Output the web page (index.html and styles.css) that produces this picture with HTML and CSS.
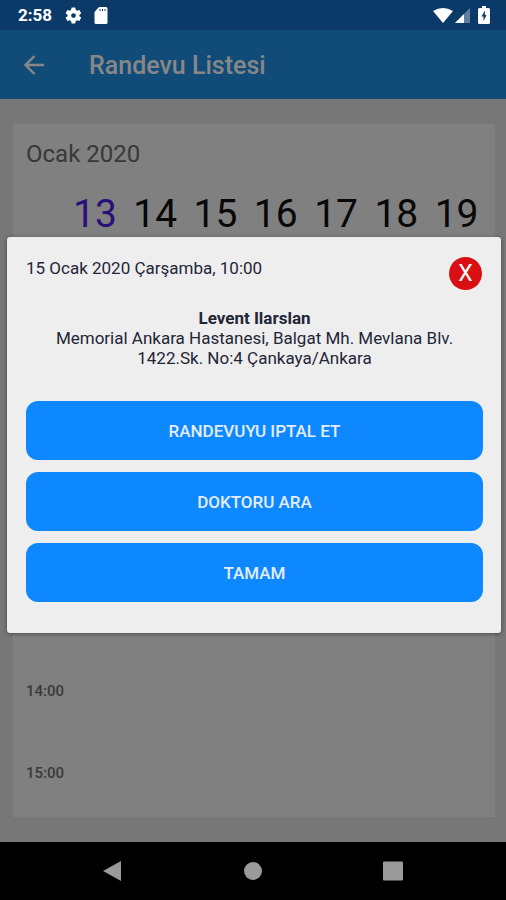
FILE: index.html
```html
<!DOCTYPE html>
<html lang="tr">
<head>
<meta charset="utf-8">
<meta name="viewport" content="width=device-width, initial-scale=1">
<title>Randevu Listesi</title>
<link rel="stylesheet" href="styles.css">
</head>
<body>
<div class="status">
  <span class="clock">2:58</span>
  <svg class="gear" width="19" height="19" viewBox="0 0 24 24"><path d="M19.4 13a7.800 7.800 0 0 0 0-2l2.100-1.600c.2-.2.300-.4.100-.7l-2-3.400c-.1-.2-.4-.3-.6-.2l-2.500 1a7.300 7.300 0 0 0-1.700-1l-.4-2.600a.5.5 0 0 0-.5-.5h-4a.5.5 0 0 0-.5.5L9 5.100c-.6.3-1.200.6-1.700 1l-2.500-1c-.2-.1-.5 0-.6.2l-2 3.400c-.1.300-.1.500.1.700L4.500 11a7.800 7.800 0 0 0 0 2l-2.200 1.600c-.2.200-.2.400-.1.700l2 3.400c.1.200.4.300.6.200l2.500-1c.5.400 1.100.8 1.700 1l.4 2.600c0 .3.200.5.500.5h4c.3 0 .5-.2.5-.5l.4-2.600c.6-.3 1.200-.6 1.700-1l2.500 1c.2.100.5 0 .6-.2l2-3.400c.1-.3.100-.5-.1-.7zM12 15a3 3 0 1 1 0-6 3 3 0 0 1 0 6z"/></svg>
  <svg class="card-icon" width="14" height="17" viewBox="0 0 14 17"><path fill-rule="evenodd" d="M5 0h7q1.500 0 1.500 1.500v14Q13.500 17 12 17H2Q.5 17 .5 15.500V5zM5.500 2v2h1V2zm2.500 0v2h1V2zm2.500 0v2h1V2z"/></svg>
  <span class="spacer"></span>
  <svg class="wifi" width="20" height="15" viewBox="0 0 20 15"><path d="M0 3Q10-3 20 3L10 15z"/></svg>
  <svg class="signal" width="15" height="15" viewBox="0 0 15 15"><path opacity=".35" d="M15 0v15H0z"/><path d="M9 6v9H0z"/></svg>
  <svg width="12" height="18" viewBox="0 0 12 18"><path fill-rule="evenodd" d="M4 0h4v2h2.500Q12 2 12 3.500v13Q12 18 10.500 18h-9Q0 18 0 16.500v-13Q0 2 1.500 2H4zM7 4.500 3.500 10.500h2v4.500L8.500 9H6.800z"/></svg>
</div>
<div class="screen">
  <header class="appbar">
    <button class="back" aria-label="Geri"><svg width="20" height="20" viewBox="0 0 20 20"><path d="M20 10H1.500M10.500 1 1.500 10l9 9" fill="none" stroke="currentColor" stroke-width="2.400"/></svg></button>
    <h1>Randevu Listesi</h1>
  </header>
  <main class="page">
    <section class="calendar">
      <h2>Ocak 2020</h2>
      <div class="row days">
        <span></span><span class="today">13</span><span>14</span><span>15</span><span>16</span><span>17</span><span>18</span><span>19</span>
      </div>
      <div class="fill"></div>
      <div class="row hour"><time>14:00</time><i></i><i></i><i></i><i></i><i></i><i></i><i></i></div>
      <div class="row hour"><time>15:00</time><i></i><i></i><i></i><i></i><i></i><i></i><i></i></div>
    </section>
  </main>
  <div class="overlay">
    <div class="dialog" role="dialog" aria-labelledby="when">
      <div class="top">
        <p id="when">15 Ocak 2020 Çarşamba, 10:00</p>
        <button class="close">X</button>
      </div>
      <p class="place"><strong>Levent Ilarslan</strong><br>Memorial Ankara Hastanesi, Balgat Mh. Mevlana Blv. 1422.Sk. No:4 Çankaya/Ankara</p>
      <div class="actions">
        <button>RANDEVUYU IPTAL ET</button>
        <button>DOKTORU ARA</button>
        <button>TAMAM</button>
      </div>
    </div>
  </div>
</div>
<nav class="nav">
  <button aria-label="Geri git"><svg width="20" height="22" viewBox="0 0 20 22"><path d="M18 1v20L0 11z"/></svg></button>
  <button aria-label="Ana ekran"><svg width="20" height="22" viewBox="0 0 20 22"><circle cx="10" cy="11" r="9"/></svg></button>
  <button aria-label="Son uygulamalar"><svg width="20" height="22" viewBox="0 0 20 22"><rect y="1.500" width="20" height="19" rx="1"/></svg></button>
</nav>
</body>
</html>
```
FILE: styles.css
```css
* { box-sizing: border-box; }
body {
  margin: 0;
  min-height: 100vh;
  display: flex;
  flex-direction: column;
  font-family: Roboto, "Liberation Sans", sans-serif;
  background: #777;
}
h1, h2, p { margin: 0; }
button { border: 0; padding: 0; font: inherit; cursor: pointer; }
svg { display: block; }

.status {
  height: 30px;
  padding: 0 16px 0 18px;
  display: flex;
  align-items: center;
  background: #0b3a69;
  color: #fff;
  fill: #fff;
}
.clock { font-size: 17px; font-weight: 700; line-height: 32px; }
.gear { margin-left: 12px; }
.card-icon { margin-left: 11px; }
.spacer { flex: 1; }
.signal { margin: 0 8px 0 2px; }

.screen { position: relative; flex: 1; display: flex; flex-direction: column; }
.appbar {
  height: 69px;
  padding: 0 24px;
  display: flex;
  align-items: center;
  gap: 45px;
  background: #114c79;
  color: #878787;
}
.back { background: none; color: inherit; }
.appbar h1 { padding-top: 2px; font-size: 25px; font-weight: 500; line-height: 30px; }

.page { flex: 1; display: flex; padding: 25px 11px 25px 13px; background: #777; }
.calendar { flex: 1; display: flex; flex-direction: column; background: #808080; }
.calendar h2 {
  padding: 14px 13px;
  font-size: 24px;
  font-weight: 400;
  line-height: 32px;
  color: #383838;
}
.row { display: grid; grid-template-columns: 60px repeat(7, 1fr); }
.days { font-size: 39px; line-height: 60px; color: #080808; }
.today { color: #27107a; }
.fill { flex: 1; }
.hour { height: 82px; }
.hour:last-child { margin-bottom: 3px; }
.hour time {
  padding-left: 13px;
  align-self: center;
  font-size: 15px;
  font-weight: 500;
  color: #3a3a3a;
}
.hour i { border-left: 1px solid #7e7e7e; }

.overlay {
  position: absolute;
  inset: 0;
  padding: 0 5px 2px 7px;
  display: flex;
  align-items: center;
}
.dialog {
  flex: 1;
  padding: 20px 18px 31px 19px;
  border-radius: 3px;
  background: #eee;
  box-shadow: 0 1px 4px #0006;
  color: #1f2638;
  font-size: 17px;
  line-height: 20px;
}
.top { display: flex; justify-content: space-between; align-items: flex-start; }
.top p { padding-top: 1px; }
.close {
  width: 33px;
  height: 33px;
  margin-right: 1px;
  border-radius: 50%;
  background: #d91013;
  color: #fff;
  font-size: 23px;
  line-height: 33px;
}
.place { padding: 18px 20px 33px; text-align: center; }
.actions { display: flex; flex-direction: column; gap: 12px; }
.actions button {
  height: 59px;
  border-radius: 12px;
  background: #0e88ff;
  color: #e4edff;
  font-weight: 500;
}

.nav {
  height: 58px;
  padding: 0 103px;
  display: flex;
  align-items: center;
  justify-content: space-between;
  background: #000;
}
.nav button { background: none; }
.nav svg { fill: #9a9a9a; }
```
